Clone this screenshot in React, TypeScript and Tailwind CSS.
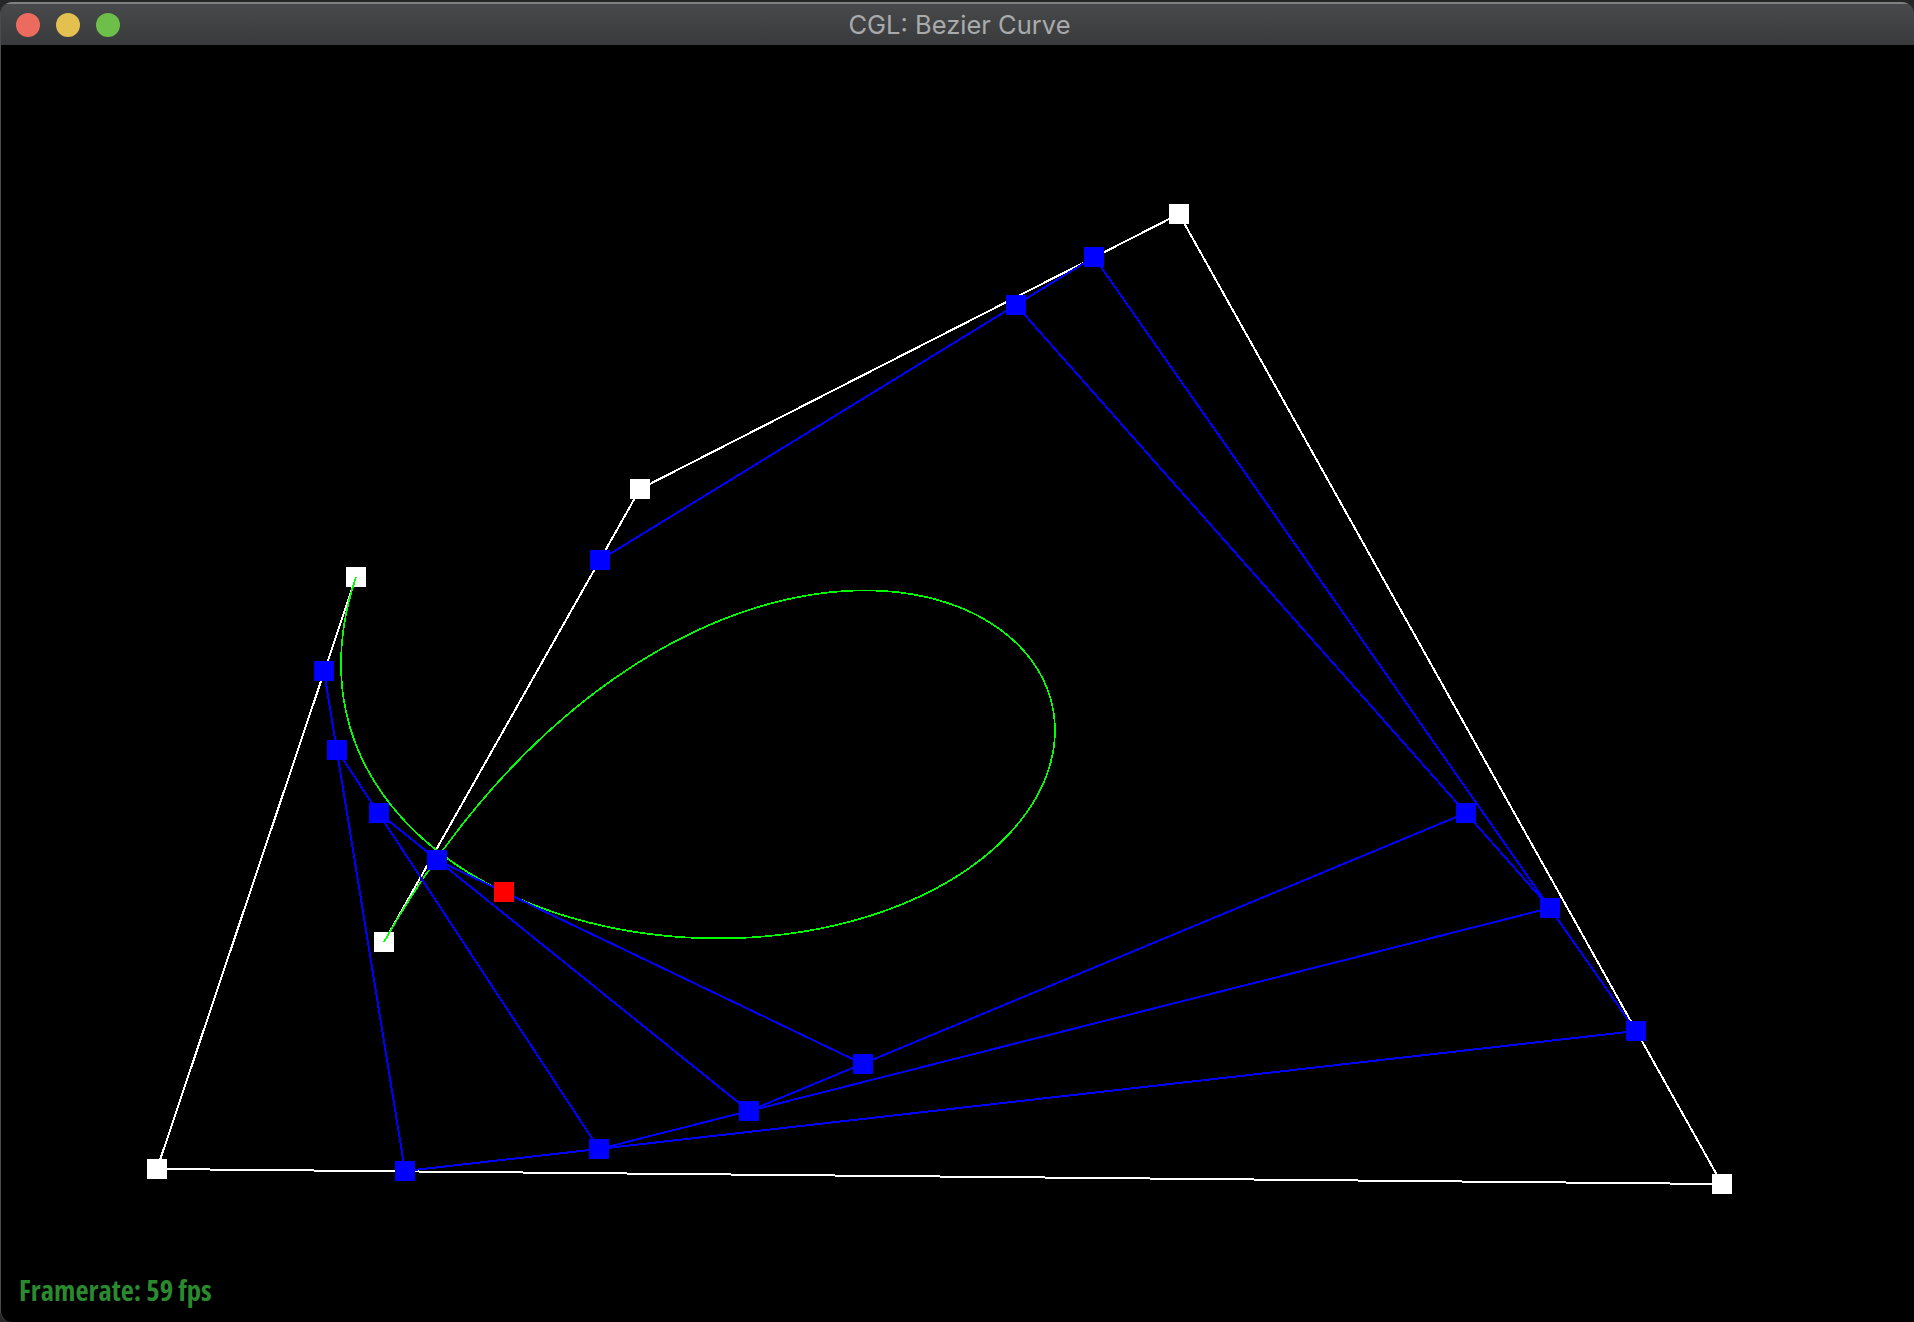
const controlPoints = [[356, 577], [157, 1169], [1722, 1184], [1179, 214], [640, 489], [384, 942]];
const levels = [
	[[324, 671], [405, 1171], [1636, 1031], [1094, 257], [600, 560]],
	[[337, 750], [599, 1149], [1550, 908], [1016, 305]],
	[[379, 813], [749, 1111], [1466, 813]],
	[[437, 860], [863, 1064]],
];
const evalPoint = [504, 892];

const toPoints = (points: number[][]) => points.map(p => p.join(',')).join(' ');

function casteljau(points: number[][], t: number): number[] {
	let pts = points;
	while (pts.length > 1) {
		pts = pts.slice(1).map((p, i) => [pts[i][0] + (p[0] - pts[i][0]) * t, pts[i][1] + (p[1] - pts[i][1]) * t]);
	}
	return pts[0];
}

const curve = Array.from({ length: 241 }, (_, i) => casteljau(controlPoints, i / 240));

function Square({ at, className }: { at: number[]; className: string }) {
	return <rect x={at[0] - 10} y={at[1] - 10} width={20} height={20} className={className} />;
}

export default function App() {
	return (
		<div className="h-[1322px] w-[1914px] overflow-hidden bg-[#262626] pt-[2px]">
			<div className="flex h-[1320px] flex-col overflow-hidden rounded-t-[12px] rounded-bl-[12px] border-l border-[#4b4b4b]">
				<header className="grid h-[43px] flex-none grid-cols-[1fr_auto_1fr] items-center border-t-2 border-[#808082] bg-gradient-to-b from-[#48494b] to-[#393a3c] pr-[11px] pl-[15px]">
					<div className="flex gap-4">
						<span className="size-6 rounded-full bg-[#ed6a5f]" />
						<span className="size-6 rounded-full bg-[#e3c04f]" />
						<span className="size-6 rounded-full bg-[#6dbf49]" />
					</div>
					<h1 className="pt-px font-['Inter',sans-serif] text-[25.5px] leading-none text-[#a9aaab]">CGL: Bezier Curve</h1>
					<div />
				</header>
				<main className="relative min-h-0 flex-1 bg-black">
					<svg viewBox="1 45 1913 1277" className="block h-[1277px] w-[1913px]" shapeRendering="crispEdges" fill="none">
						<polyline points={toPoints(controlPoints)} strokeWidth={2} className="stroke-white" />
						{controlPoints.map(p => (
							<Square key={p.join()} at={p} className="fill-white" />
						))}
						<polyline points={toPoints(curve)} strokeWidth={1.7} className="stroke-[#00ff00]" />
						{levels.map(level => (
							<polyline key={level.join()} points={toPoints(level)} strokeWidth={2} className="stroke-[#0000ff]" />
						))}
						<line x1={863} y1={1064} x2={437} y2={860} strokeWidth={2} className="stroke-[#0000ff]" />
						{levels.flat().map(p => (
							<Square key={p.join()} at={p} className="fill-[#0000ff]" />
						))}
						<Square at={evalPoint} className="fill-[#ff0000]" />
					</svg>
					<p className="absolute bottom-[17px] left-[18px] font-['Open_Sans',sans-serif] text-[28.6px] leading-none font-bold font-stretch-condensed text-[#2b8a2e]">
						Framerate: 59 fps
					</p>
				</main>
			</div>
		</div>
	);
}
